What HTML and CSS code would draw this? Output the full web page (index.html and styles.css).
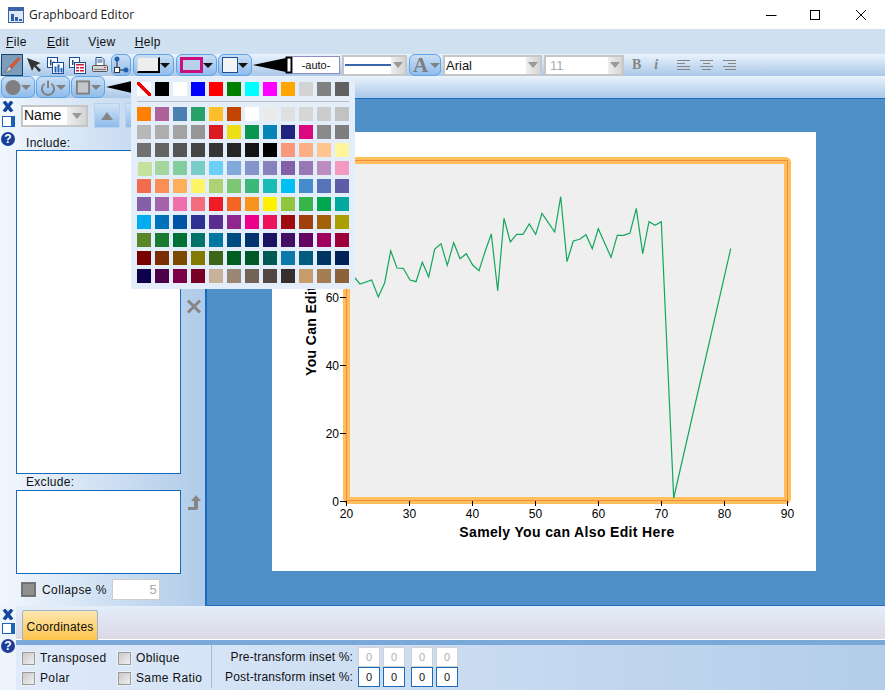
FILE: index.html
```html
<!DOCTYPE html>
<html lang="en">
<head>
  <meta charset="UTF-8">
  <title>Graphboard Editor</title>
  <link rel="stylesheet" href="styles.css">
</head>
<body>
<div class="app">

  <!-- title bar -->
  <div class="titlebar">
    <svg class="app-icon" width="16" height="16" viewBox="0 0 16 16">
      <rect x="0.5" y="0.5" width="15" height="15" fill="#dfe8f5" stroke="#3a63a8"/>
      <rect x="1" y="1" width="14" height="3" fill="#3a63a8"/>
      <rect x="3" y="7" width="3" height="7" fill="#2f5fae"/>
      <rect x="7" y="10" width="3" height="4" fill="#2f5fae"/>
      <rect x="11" y="12" width="3" height="2" fill="#2f5fae"/>
    </svg>
    <span class="app-title">Graphboard Editor</span>
    <div class="win-controls">
      <svg width="12" height="12" viewBox="0 0 12 12"><path d="M1 6.500h10.500" stroke="#000"/></svg>
      <svg width="12" height="12" viewBox="0 0 12 12"><rect x="0.500" y="1.500" width="9" height="9" fill="none" stroke="#000"/></svg>
      <svg width="12" height="12" viewBox="0 0 12 12"><path d="M1 1l10 10M11 1L1 11" stroke="#000" fill="none"/></svg>
    </div>
  </div>

  <!-- menu -->
  <div class="menubar">
    <span class="menu menu-file"><u>F</u>ile</span>
    <span class="menu menu-edit"><u>E</u>dit</span>
    <span class="menu menu-view">V<u>i</u>ew</span>
    <span class="menu menu-help"><u>H</u>elp</span>
  </div>

  <!-- first toolbar -->
  <div class="toolbar">
    <button class="icon-btn selected">
      <svg width="18" height="18" viewBox="0 0 18 18">
        <path d="M15.500 1.500L7 10l2 2 7.500-8.500z" fill="#ef5a28" stroke="#b8330d" stroke-width=".6"/>
        <path d="M6.500 10.500c-2 .5-2 2.500-2.500 3.500-.4.800-1.500 1.500-2.500 2 3 .5 6-.5 7-3.500z" fill="#c9cdd2" stroke="#555" stroke-width=".6"/>
      </svg>
    </button>
    <svg class="tool-arrow" width="16" height="16" viewBox="0 0 16 16">
      <path d="M1 1l5 13 2.300-4.500L13 15l2-2-5-4.700 4.500-2.300z" fill="#333"/>
    </svg>
    <svg class="tool-chart" width="17" height="17" viewBox="0 0 17 17">
      <rect x="0.500" y="0.500" width="10" height="10" fill="#fff" stroke="#1b4f93"/>
      <path d="M3 2.500h1.500v6H3zM6 4.500h1.500v4H6z" fill="#1b4f93"/>
      <rect x="5.500" y="5.500" width="11" height="11" fill="#fff" stroke="#1b4f93"/>
      <path d="M7.500 9.500h2v6h-2zM10.500 7.500h2v8h-2zM13.500 11h2v4.500h-2z" fill="#1d62b5"/>
    </svg>
    <svg class="tool-table" width="17" height="17" viewBox="0 0 17 17">
      <rect x="0.500" y="0.500" width="10" height="10" fill="#fff" stroke="#1b4f93"/>
      <path d="M3 3h1.500v5H3zM6 5h1.500v3H6z" fill="#1b4f93"/>
      <rect x="5.500" y="5.500" width="11" height="11" fill="#fff" stroke="#1b4f93"/>
      <path d="M7 7h8v1.500H7zM7 10h3v1.500H7zM11 10h4v1.500h-4zM7 13h3v1.500H7zM11 13h4v1.500h-4z" fill="#d3163a"/>
    </svg>
    <svg class="tool-print" width="16" height="16" viewBox="0 0 16 16">
      <path d="M4 .5h6l2 2v6H4z" fill="#fff" stroke="#1b4f93"/>
      <path d="M5.500 3h5M5.500 5h5" stroke="#1b4f93"/>
      <rect x="0.500" y="8.500" width="15" height="6" rx="1" fill="#d4d4d4" stroke="#555"/>
      <rect x="2" y="12" width="12" height="1" fill="#777"/>
      <rect x="12" y="10" width="2" height="1" fill="#e33"/>
    </svg>
    <button class="round-btn connector">
      <svg width="16" height="18" viewBox="0 0 16 18">
        <path d="M4 3v11h8" stroke="#222" fill="none"/>
        <circle cx="4" cy="3" r="2.500" fill="#1d62b5"/>
        <rect x="1.500" y="11.500" width="5" height="5" fill="#fff" stroke="#333"/>
        <circle cx="13" cy="14" r="2.500" fill="#1d62b5"/>
      </svg>
    </button>
    <button class="round-btn drop fill-drop"><i class="swatch-fill"></i><i class="caret"></i></button>
    <button class="round-btn drop border-drop"><i class="swatch-border"></i><i class="caret"></i></button>
    <button class="round-btn drop text-drop"><i class="swatch-text"></i><i class="caret"></i></button>
    <svg class="wedge" width="39" height="18" viewBox="0 0 39 18">
      <path d="M0 9l33-7v14z" fill="#000"/>
      <rect x="33.500" y="1.500" width="5" height="15" fill="#fff" stroke="#000" stroke-width="2"/>
    </svg>
    <div class="auto-input">-auto-</div>
    <div class="combo line-combo"><span class="combo-field"><i class="line-sample"></i></span><span class="combo-arrow"><i></i></span></div>
    <button class="round-btn font-btn"><span class="font-a">A</span><i class="caret gray"></i></button>
    <div class="combo font-combo"><span class="combo-field">Arial</span><span class="combo-arrow"><i></i></span></div>
    <div class="combo size-combo"><span class="combo-field muted">11</span><span class="combo-arrow"><i></i></span></div>
    <span class="fmt fmt-b">B</span>
    <span class="fmt fmt-i">i</span>
    <svg class="align align-left" width="13" height="11" viewBox="0 0 13 11"><path d="M0 .5h13M0 3.500h8M0 6.500h13M0 9.500h13" stroke="#858585"/></svg>
    <svg class="align" width="13" height="11" viewBox="0 0 13 11"><path d="M0 .5h13M3 3.500h7M0 6.500h13M2 9.500h9" stroke="#858585"/></svg>
    <svg class="align" width="13" height="11" viewBox="0 0 13 11"><path d="M0 .5h13M5 3.500h8M0 6.500h13M2 9.500h11" stroke="#858585"/></svg>
  </div>

  <!-- second toolbar -->
  <div class="toolbar toolbar-two">
    <button class="round-btn shape-btn">
      <svg width="17" height="17" viewBox="0 0 17 17"><circle cx="8.500" cy="8.500" r="8" fill="#808080"/></svg>
      <i class="caret gray"></i>
    </button>
    <button class="round-btn shape-btn">
      <svg width="17" height="17" viewBox="0 0 17 17"><path d="M5 4.500a6.500 6.500 0 1 0 7 0M8.500 1v8" fill="none" stroke="#808080" stroke-width="2"/></svg>
      <i class="caret gray"></i>
    </button>
    <button class="round-btn shape-btn">
      <svg width="17" height="17" viewBox="0 0 17 17"><rect x="2" y="2" width="13" height="13" fill="#c3c7cb" stroke="#808080" stroke-width="2"/></svg>
      <i class="caret gray"></i>
    </button>
    <svg class="wedge-small" width="26" height="14" viewBox="0 0 26 14"><path d="M0 7l26-6v12z" fill="#000"/></svg>
  </div>

  <!-- main area -->
  <div class="main">
    <div class="rail">
      <svg class="rail-x" width="12" height="11" viewBox="0 0 12 11"><path d="M2 .5l8 10M10 .5l-8 10" stroke="#14469c" stroke-width="3.500" fill="none"/></svg>
      <i class="rail-panel"></i>
      <span class="rail-help">?</span>
    </div>
    <div class="side">
      <div class="side-top">
        <div class="combo name-combo"><span class="combo-field">Name</span><span class="combo-arrow"><i></i></span></div>
        <button class="sort-btn"><i></i></button>
        <button class="sort-btn"><i></i></button>
      </div>
      <div class="field-label label-include">Include:</div>
      <div class="list-row">
        <div class="listbox include-list"></div>
        <svg class="remove-icon" width="16" height="15" viewBox="0 0 16 15"><path d="M2 1.500l12 12M14 1.500l-12 12" stroke="#868686" stroke-width="3"/></svg>
      </div>
      <div class="field-label label-exclude">Exclude:</div>
      <div class="list-row">
        <div class="listbox exclude-list"></div>
        <svg class="restore-icon" width="14" height="16" viewBox="0 0 14 16"><path d="M9 0l5 6h-3v7a2 2 0 0 1-2 2H1v-3h6V6H4z" fill="#868686"/></svg>
      </div>
      <div class="collapse-row">
        <i class="checkbox dark"></i>
        <span class="collapse-label">Collapse %</span>
        <div class="small-input collapse-input">5</div>
      </div>
    </div>
    <div class="canvas">
      <div class="page">
        <svg class="chart" width="544" height="439" viewBox="272 132 544 439">
          <rect x="346.500" y="160.500" width="441" height="340" rx="2" fill="#efefef" stroke="#fdc05a" stroke-width="7"/>
          <rect x="346.500" y="160.500" width="441" height="340" fill="none" stroke="#f68a42"/>
          <polyline fill="none" stroke="#12a75a" stroke-width="1.200" points="349,272 355,278 360,284 371.700,280 378.300,297 384.700,282.700 390.700,250.700 397,268 403.300,268.300 410,280 416,281.700 422.300,262.300 428.700,277 434.700,249 441,243.700 447.300,265.300 453.700,242.700 460,258.700 466.300,253.700 472.700,265 479,270.700 485,251.700 491.300,234 497.700,290.700 504,218.300 510.300,242 516.700,234.300 523,234.300 529.300,224 535.700,234.300 542,213.300 554.700,232 560.700,196.700 567,261.700 573.300,241 579.700,239.300 586,234.700 592.300,248.700 598.300,228.700 611,257.300 617.300,235.300 623.700,235.300 630,233 636.300,208.300 642.700,253.700 649,221.700 655,225.300 661.300,221.700 673.700,498 730.700,248.700"/>
          <path d="M346.500 501v5M409.500 501v5M472.500 501v5M535.500 501v5M598.500 501v5M661.500 501v5M724.500 501v5M787.500 501v5M340 501.500h6M340 433.500h6M340 365.500h6M340 297.500h6" stroke="#000" fill="none"/>
          <g class="tick-x">
            <text x="346.500" y="518">20</text>
            <text x="409.500" y="518">30</text>
            <text x="472.500" y="518">40</text>
            <text x="535.500" y="518">50</text>
            <text x="598.500" y="518">60</text>
            <text x="661.500" y="518">70</text>
            <text x="724.500" y="518">80</text>
            <text x="787.500" y="518">90</text>
          </g>
          <g class="tick-y">
            <text x="339" y="506">0</text>
            <text x="339" y="438">20</text>
            <text x="339" y="370">40</text>
            <text x="339" y="302">60</text>
          </g>
          <text class="axis-title x-title" x="567" y="537">Samely You can Also Edit Here</text>
          <text class="axis-title" x="316" y="376" transform="rotate(-90 316 376)">You Can Edit Here</text>
        </svg>
      </div>
    </div>
  </div>

  <!-- bottom panel -->
  <div class="bottom">
    <div class="rail rail-bottom">
      <svg class="rail-x" width="12" height="11" viewBox="0 0 12 11"><path d="M2 .5l8 10M10 .5l-8 10" stroke="#14469c" stroke-width="3.500" fill="none"/></svg>
      <i class="rail-panel"></i>
      <span class="rail-help">?</span>
    </div>
    <div class="bottom-body">
      <div class="tabstrip"><div class="tab">Coordinates</div></div>
      <div class="band"></div>
      <div class="coords">
        <div class="options">
          <label class="option"><i class="checkbox"></i>Transposed</label>
          <label class="option"><i class="checkbox"></i>Oblique</label>
          <label class="option"><i class="checkbox"></i>Polar</label>
          <label class="option"><i class="checkbox"></i>Same Ratio</label>
        </div>
        <div class="insets">
          <span class="inset-label">Pre-transform inset %:</span>
          <div class="inset-boxes"><b class="inset off">0</b><b class="inset off">0</b><b class="inset off gap">0</b><b class="inset off">0</b></div>
          <span class="inset-label">Post-transform inset %:</span>
          <div class="inset-boxes"><b class="inset">0</b><b class="inset">0</b><b class="inset gap">0</b><b class="inset">0</b></div>
        </div>
      </div>
    </div>
  </div>

  <!-- colour popup -->
  <div class="palette" id="palette">
    <div class="swatches" id="basic"></div>
    <div class="palette-line"></div>
    <div class="swatches" id="full"></div>
  </div>
</div>

<script>
  const basic = ['none', '#000000', '#ffffff', '#0000ff', '#ff0000', '#008000', '#00ffff', '#ff00ff', '#ffa500', '#d3d3d3', '#808080', '#616161'];
  const full = [
    '#ff8000', '#ad6399', '#4a7fb0', '#28a267', '#ffbf2a', '#c24400', '#ffffff', '#eaeaea', '#e0e0e0', '#d6d6d6', '#cccccc', '#c2c2c2',
    '#b7b7b7', '#adadad', '#a3a3a3', '#969696', '#da1a21', '#ecdf17', '#0a9650', '#0584b8', '#21247f', '#dc0880', '#8a8a8a', '#7e7e7e',
    '#707070', '#646464', '#555555', '#454545', '#363636', '#262626', '#141414', '#000000', '#f9977a', '#fdae83', '#fec68e', '#fff59d',
    '#c6e29f', '#a3d69e', '#82cc9e', '#7accc8', '#6dcff6', '#7ea9da', '#8494c9', '#8782bc', '#855fa8', '#9778b4', '#bd8cbf', '#f49ac1',
    '#f26d4f', '#f98f54', '#fdaf5a', '#fff467', '#acd372', '#7dc673', '#3cb878', '#19bcb4', '#00bff3', '#448ccb', '#5674b9', '#5f5ca7',
    '#8560a8', '#a763a9', '#f06eaa', '#f26d7d', '#ee1c25', '#f26522', '#f7941d', '#fff200', '#8fc63d', '#37b44a', '#00a650', '#00a99d',
    '#00aeef', '#0072bc', '#0054a5', '#2e3192', '#5c2d91', '#91278e', '#ec008c', '#ed145b', '#9e0b0e', '#a0410d', '#a36209', '#aba000',
    '#588528', '#197b30', '#007236', '#00746b', '#0076a3', '#004a80', '#003471', '#1b1464', '#440e62', '#630460', '#9e005d', '#9e0039',
    '#790000', '#7a2e00', '#7d4900', '#827b00', '#3e6618', '#005e20', '#005826', '#005952', '#0b7aa8', '#005b7f', '#003562', '#002157',
    '#0d004c', '#4b0049', '#7b0046', '#7a0026', '#c7b299', '#998675', '#736357', '#534741', '#362f2d', '#c69c6d', '#a67c52', '#8c6239'
  ];

  function fill(id, colours) {
    const box = document.getElementById(id);
    colours.forEach(function(c) {
      const s = document.createElement('i');
      s.className = c === 'none' ? 'swatch swatch-none' : 'swatch';
      if (c !== 'none') s.style.background = c;
      box.appendChild(s);
    });
  }
  fill('basic', basic);
  fill('full', full);
</script>
</body>
</html>
```

FILE: styles.css
```css
* {
  box-sizing: border-box;
}
body {
  margin: 0;
  background: #fff;
  font-family: "Liberation Sans", Arial, sans-serif;
  font-size: 12px;
  color: #111;
}
i {
  display: block;
  font-style: normal;
}
button {
  padding: 0;
  font: inherit;
}
.app {
  position: relative;
  width: 885px;
  height: 690px;
  overflow: hidden;
  display: flex;
  flex-direction: column;
}

/* title bar */
.titlebar {
  height: 29px;
  flex: none;
  display: flex;
  align-items: center;
  padding-left: 8px;
  background: #fff;
}
.app-title {
  margin-left: 5px;
  font-family: "Open Sans", "Noto Sans", sans-serif;
  font-size: 12px;
  color: #222;
}
.win-controls {
  margin-left: auto;
  display: flex;
  gap: 33px;
  padding-right: 18px;
}

/* menu */
.menubar {
  height: 25px;
  flex: none;
  display: flex;
  align-items: center;
  background: #cfe0f1;
  letter-spacing: .4px;
}
.menu-file { margin-left: 6px; }
.menu-edit { margin-left: 20px; }
.menu-view { margin-left: 19px; }
.menu-help { margin-left: 19px; }

/* toolbars */
.toolbar {
  height: 22px;
  flex: none;
  display: flex;
  align-items: center;
  background: linear-gradient(#eaf3fc, #aac8e9);
}
.icon-btn {
  width: 22px;
  height: 22px;
  margin-left: 1px;
  display: flex;
  align-items: center;
  justify-content: center;
  background: #7d9bbb;
  border: 1px solid #14466f;
}
.tool-arrow { margin-left: 3px; }
.tool-chart { margin-left: 5px; }
.tool-table { margin-left: 5px; }
.tool-print { margin-left: 6px; }
.round-btn {
  height: 22px;
  display: flex;
  align-items: center;
  border: 1px solid #5ea4e6;
  border-radius: 6px;
  background: linear-gradient(#c9def4, #8fbcec);
}
.connector {
  width: 20px;
  margin-left: 3px;
  justify-content: center;
}
.caret {
  width: 0;
  height: 0;
  border-left: 5px solid transparent;
  border-right: 5px solid transparent;
  border-top: 5px solid #111;
}
.caret.gray {
  border-top-color: #808080;
}
.drop {
  justify-content: space-between;
  padding: 0 3px;
}
.fill-drop { width: 41px; margin-left: 2px; }
.border-drop { width: 41px; margin-left: 2px; }
.text-drop { width: 34px; margin-left: 1px; }
.swatch-fill {
  width: 25px;
  height: 16px;
  background: #eee;
  border: 1px solid #1b4f93;
  border-width: 1px 2px 2px 1px;
  border-color: #c9dcf1 #000 #000 #c9dcf1;
}
.swatch-border {
  width: 25px;
  height: 16px;
  background: #b9d0ea;
  border: 3px solid #c8107c;
}
.swatch-text {
  width: 18px;
  height: 16px;
  background: #f4f4f6;
  border: 1px solid #1b4f93;
}
.wedge { margin-left: 1px; }
.auto-input {
  width: 48px;
  height: 18px;
  line-height: 16px;
  text-align: center;
  font-size: 11px;
  background: #fff;
  border: 1px solid #8e8ec4;
}
.combo {
  display: flex;
  height: 21px;
  background: #fff;
  border: 2px solid #c6c6c6;
}
.combo-field {
  flex: 1;
  padding-left: 1px;
  line-height: 17px;
  font-size: 13px;
  overflow: hidden;
}
.combo-field.muted {
  color: #aaa;
  padding-left: 4px;
}
.combo-arrow {
  width: 14px;
  display: flex;
  align-items: center;
  justify-content: center;
  background: linear-gradient(90deg, #eee, #d4d4d4);
}
.combo-arrow i {
  width: 0;
  height: 0;
  border-left: 5px solid transparent;
  border-right: 5px solid transparent;
  border-top: 6px solid #999;
}
.line-combo {
  width: 65px;
  margin-left: 2px;
}
.line-sample {
  height: 2px;
  margin: 7px 0 0 0;
  background: #3a63a8;
}
.font-btn {
  width: 32px;
  margin-left: 2px;
  padding-left: 3px;
  gap: 2px;
}
.font-a {
  font-family: "Liberation Serif", serif;
  font-weight: bold;
  font-size: 21px;
  line-height: 20px;
  color: #7d7d7d;
}
.font-combo { width: 99px; margin-left: 2px; }
.size-combo { width: 80px; margin-left: 2px; }
.fmt {
  font-family: "Liberation Serif", serif;
  font-weight: bold;
  font-size: 14px;
  color: #858585;
}
.fmt-b { margin-left: 8px; }
.fmt-i {
  margin-left: 13px;
  font-style: italic;
}
.align { margin-left: 10px; }
.align-left { margin-left: 19px; }
.shape-btn {
  width: 34px;
  padding: 0 3px;
  justify-content: space-between;
  margin-left: 1px;
}
.wedge-small { margin-left: 1px; }

/* main area */
.main {
  height: 508px;
  flex: none;
  display: flex;
  background: linear-gradient(90deg, #f1f7fe, #b0cbe8 205px);
}
.rail {
  width: 16px;
  flex: none;
  display: flex;
  flex-direction: column;
  align-items: center;
}
.rail-x {
  flex: none;
  margin-top: 3px;
}
.rail-panel {
  width: 13px;
  height: 11px;
  margin-top: 4px;
  background: linear-gradient(90deg, #fff 70%, #1d62b5 70%);
  border: 1px solid #1d62b5;
}
.rail-help {
  width: 14px;
  height: 14px;
  margin-top: 5px;
  border-radius: 50%;
  text-align: center;
  font-weight: bold;
  font-size: 12px;
  line-height: 14px;
  color: #fff;
  background: #1c3f9c;
}
.side {
  width: 189px;
  flex: none;
  display: flex;
  flex-direction: column;
  padding-top: 5px;
}
.side-top {
  height: 25px;
  flex: none;
  display: flex;
  align-items: center;
  padding-left: 5px;
}
.name-combo {
  width: 67px;
  height: 22px;
}
.name-combo .combo-field {
  font-size: 14px;
}
.name-combo .combo-arrow {
  width: 19px;
}
.sort-btn {
  width: 26px;
  height: 25px;
  margin-left: 6px;
  display: flex;
  align-items: center;
  justify-content: center;
  border: 1px solid #b8d2ec;
  background: linear-gradient(#cfe2f6, #8fbcec);
}
.sort-btn + .sort-btn { margin-left: 5px; }
.sort-btn i {
  width: 0;
  height: 0;
  border-left: 6px solid transparent;
  border-right: 6px solid transparent;
  border-bottom: 8px solid #868686;
}
.field-label {
  height: 22px;
  padding: 9px 0 0 10px;
  line-height: 13px;
  letter-spacing: .3px;
}
.label-exclude {
  height: 16px;
  padding-top: 2px;
}
.list-row {
  display: flex;
}
.listbox {
  width: 165px;
  background: #fff;
  border: 1px solid #1a6bbd;
}
.include-list { height: 324px; }
.exclude-list { height: 84px; }
.remove-icon {
  margin: 149px 0 0 5px;
}
.restore-icon {
  margin: 5px 0 0 6px;
}
.collapse-row {
  display: flex;
  align-items: center;
  height: 21px;
  margin-top: 5px;
  padding-left: 5px;
}
.checkbox {
  width: 15px;
  height: 15px;
  flex: none;
  border: 1px solid #eef2f6;
  outline: 1px solid #9a9a9a;
  outline-offset: -2px;
  background: linear-gradient(135deg, #c6c6c6, #f3f3f3);
}
.checkbox.dark {
  background: #909090;
  outline-color: #6e6e6e;
  border-color: #777;
}
.collapse-label {
  margin-left: 6px;
  letter-spacing: .4px;
}
.small-input {
  background: #fff;
  border: 1px solid #ccc;
  color: #a5a5a5;
}
.collapse-input {
  width: 48px;
  height: 21px;
  margin-left: 5px;
  padding-right: 2px;
  text-align: right;
  line-height: 19px;
  font-size: 13px;
}
.canvas {
  flex: 1;
  display: flex;
  align-items: center;
  justify-content: center;
  padding: 0 4px 2px 0;
  background: #4f90c9;
  border: 1px solid #1a6bbd;
  border-width: 1px 0 1px 2px;
}
.page {
  width: 544px;
  height: 439px;
  background: #fff;
}
.chart {
  display: block;
}
.chart text {
  font-family: "Liberation Sans", Arial, sans-serif;
  font-size: 12px;
  fill: #000;
}
.tick-x text {
  text-anchor: middle;
}
.tick-y text {
  text-anchor: end;
}
.chart .axis-title {
  font-size: 14px;
  font-weight: bold;
  letter-spacing: .35px;
}
.chart .x-title {
  text-anchor: middle;
}

/* bottom panel */
.bottom {
  flex: 1;
  display: flex;
  background: #edf4fc;
}
.rail-bottom .rail-x {
  margin-top: 3px;
}
.rail-bottom .rail-panel {
  margin-top: 3px;
}
.bottom-body {
  flex: 1;
  display: flex;
  flex-direction: column;
}
.tabstrip {
  height: 34px;
  flex: none;
  padding: 4px 0 0 6px;
  background: linear-gradient(#e3eefa, #dcd8e5);
  border-bottom: 1px solid #fff;
}
.tab {
  width: 76px;
  height: 32px;
  line-height: 32px;
  text-align: center;
  letter-spacing: .2px;
  color: #111;
  background: linear-gradient(#fee7ae, #fdc246);
  border: 1px solid #9db4cc;
  border-bottom: none;
  border-radius: 3px 3px 0 0;
}
.band {
  height: 5px;
  flex: none;
  background: #79a8d9;
}
.coords {
  flex: 1;
  display: flex;
  background: linear-gradient(90deg, #dfeafa, #b3cde9);
}
.options {
  width: 196px;
  flex: none;
  display: grid;
  grid-template-columns: 96px 1fr;
  grid-auto-rows: 20px;
  padding: 3px 0 0 5px;
  border-right: 1px solid #a8bccf;
  margin-bottom: 2px;
}
.option {
  display: flex;
  align-items: center;
  gap: 4px;
  letter-spacing: .35px;
}
.insets {
  display: grid;
  grid-template-columns: 141px auto;
  grid-auto-rows: 20px;
  padding: 2px 0 0 0;
}
.inset-label {
  text-align: right;
  line-height: 20px;
  letter-spacing: .14px;
}
.inset-boxes {
  display: flex;
  gap: 3px;
  padding-left: 5px;
}
.inset {
  width: 22px;
  height: 20px;
  text-align: center;
  line-height: 18px;
  font-weight: normal;
  font-size: 11px;
  background: #fff;
  border: 1px solid #1a6bbd;
}
.inset.off {
  color: #b0b0b0;
  border-color: #d0d0d0;
}
.inset.gap {
  margin-left: 3px;
}

/* colour popup */
.palette {
  position: absolute;
  left: 131px;
  top: 77px;
  width: 224px;
  height: 212px;
  padding: 5px 6px 0;
  background: #e3eefa;
}
.swatches {
  display: grid;
  grid-template-columns: repeat(12, 14px);
  grid-auto-rows: 14px;
  gap: 4px;
}
.palette-line {
  height: 1px;
  margin: 5px 0 5px;
  background: #b9bdc4;
}
.swatch-none {
  background: linear-gradient(45deg, #fff 42%, #f00000 42%, #f00000 58%, #fff 58%);
}
#full .swatch:nth-child(37) {
  transform: translate(1px, 1px);
}
```
